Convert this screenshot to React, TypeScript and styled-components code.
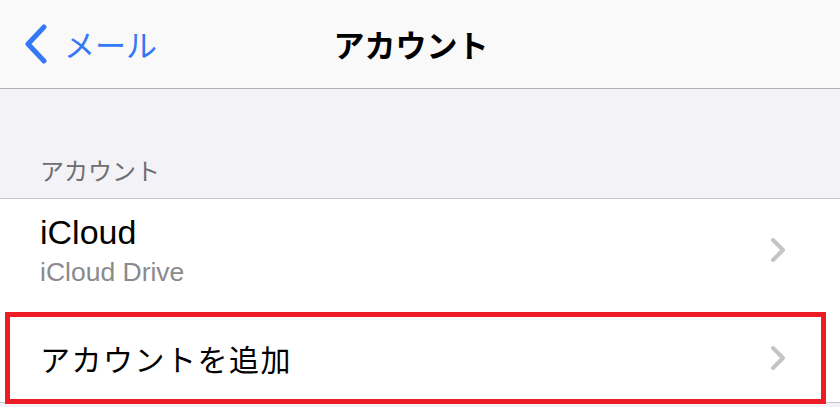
import React from "react";
import styled, { createGlobalStyle } from "styled-components";

const GlobalStyle = createGlobalStyle`
  html, body {
    margin: 0;
    padding: 0;
    background: #ffffff;
  }
  body {
    font-family: "Liberation Sans", "Noto Sans CJK JP", sans-serif;
    -webkit-font-smoothing: antialiased;
  }
`;

const Page = styled.div`
  position: relative;
  width: 840px;
  display: flex;
  flex-direction: column;
`;

const NavBar = styled.header`
  height: 88px;
  background: #f9f9f9;
  border-bottom: 1px solid #b2b2b2;
  display: grid;
  grid-template-columns: 1fr auto 1fr;
  align-items: center;
`;

const BackButton = styled.div`
  display: flex;
  align-items: center;
  gap: 16px;
  padding-left: 24px;
  color: #3478f6;
  font-family: "Noto Sans CJK JP", sans-serif;
  font-size: 31px;
  line-height: 40px;
`;

const Title = styled.h1`
  margin: 0 18px 0 0;
  font-family: "Noto Sans CJK JP", sans-serif;
  font-weight: 700;
  font-size: 31px;
  line-height: 40px;
  color: #000000;
`;

const SectionHeader = styled.div`
  height: 110px;
  box-sizing: border-box;
  background: #f2f2f7;
  border-bottom: 1px solid #c8c7cc;
  display: flex;
  align-items: flex-end;
  padding: 0 0 16px 40px;
  font-family: "Noto Sans CJK JP", sans-serif;
  font-size: 24px;
  line-height: 24px;
  color: #6d6d72;
`;

const List = styled.div`
  background: #ffffff;
  display: flex;
  flex-direction: column;
`;

const Row = styled.div<{ $height: number; $padTop: number }>`
  height: ${(p) => p.$height}px;
  box-sizing: border-box;
  padding: ${(p) => p.$padTop}px 53px 0 40px;
  display: flex;
  align-items: flex-start;
  justify-content: space-between;
`;

const RowText = styled.div`
  display: flex;
  flex-direction: column;
  gap: 4px;
`;

const RowTitle = styled.div`
  font-size: 34px;
  line-height: 40px;
  color: #000000;
`;

const RowSubtitle = styled.div`
  font-size: 26.5px;
  line-height: 32px;
  color: #8a8a8e;
`;

const RowLabel = styled.div`
  font-family: "Noto Sans CJK JP", sans-serif;
  font-size: 30px;
  line-height: 88px;
  letter-spacing: 1.5px;
  color: #000000;
`;

const ChevronBox = styled.div<{ $h: number }>`
  height: ${(p) => p.$h}px;
  display: flex;
  align-items: center;
`;

const BottomBand = styled.div`
  height: 4px;
  background: #f2f2f7;
  border-top: 1px solid #c8c7cc;
`;

const Highlight = styled.div`
  position: absolute;
  left: 5px;
  top: 312px;
  width: 821px;
  height: 92px;
  box-sizing: border-box;
  border: 5px solid #ee1d25;
  pointer-events: none;
`;

const BackChevron = () => (
  <svg width="24" height="40" viewBox="0 0 24 40">
    <polyline
      points="20,3 4,20 20,37"
      fill="none"
      stroke="#3478f6"
      strokeWidth="5"
      strokeLinecap="round"
      strokeLinejoin="round"
    />
  </svg>
);

const Disclosure = () => (
  <svg width="18" height="28" viewBox="0 0 18 28">
    <polyline
      points="4,4 14,14 4,24"
      fill="none"
      stroke="#c4c4c7"
      strokeWidth="4"
      strokeLinecap="round"
      strokeLinejoin="round"
    />
  </svg>
);

export default function App() {
  return (
    <>
      <GlobalStyle />
      <Page>
        <NavBar>
          <BackButton>
            <BackChevron />
            <span>メール</span>
          </BackButton>
          <Title>アカウント</Title>
          <div />
        </NavBar>
        <SectionHeader>アカウント</SectionHeader>
        <List>
          <Row $height={102} $padTop={13}>
            <RowText>
              <RowTitle>iCloud</RowTitle>
              <RowSubtitle>iCloud Drive</RowSubtitle>
            </RowText>
            <ChevronBox $h={76}>
              <Disclosure />
            </ChevronBox>
          </Row>
          <Row $height={101} $padTop={13}>
            <RowLabel>アカウントを追加</RowLabel>
            <ChevronBox $h={88}>
              <Disclosure />
            </ChevronBox>
          </Row>
        </List>
        <BottomBand />
        <Highlight />
      </Page>
    </>
  );
}
